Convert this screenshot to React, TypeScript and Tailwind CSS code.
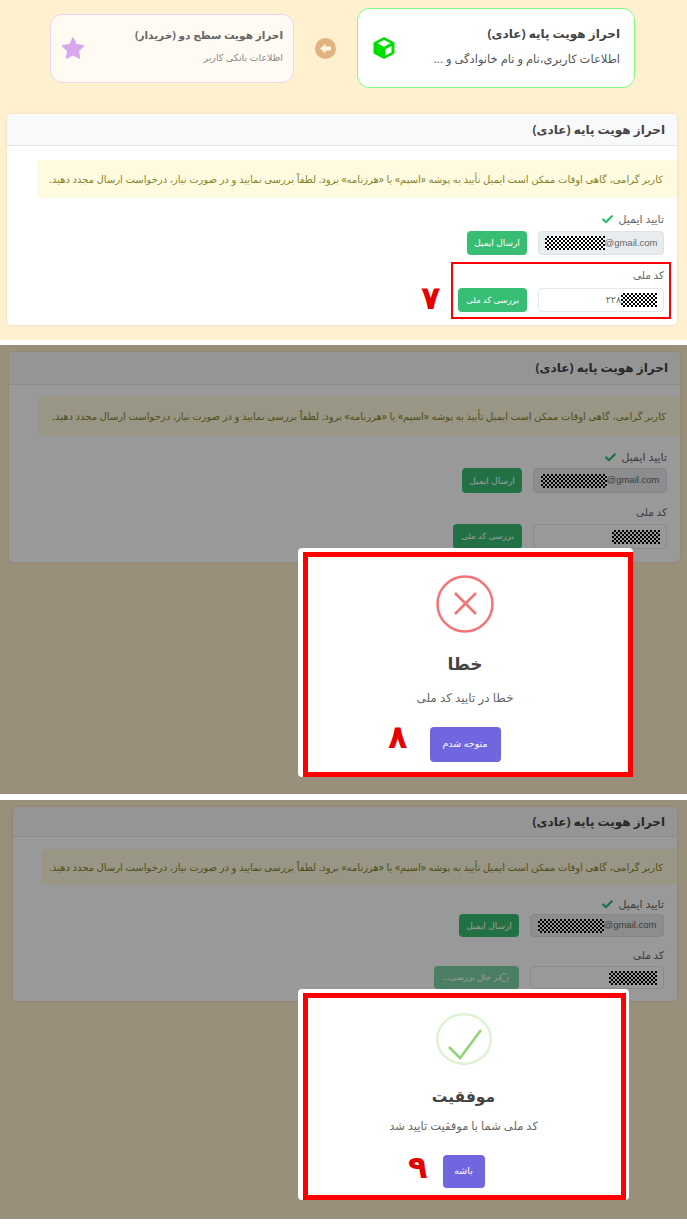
import { Check, Loader2 } from "lucide-react";

const fa = "font-['Noto_Sans','DejaVu_Sans',sans-serif]";
const mask = "inline-block h-[14px] bg-[repeating-conic-gradient(#000_0_25%,#fff_0_50%)] bg-[length:4px_4px]";

function KycCard({ wrap, head, body, alert, lblTop, lblTop2, rowTop, rowH, emailW, codeW, maskW, codeMask, pb, loading, digits }: any) {
  return (
    <div className={`bg-white rounded shadow-[0_0_3px_rgba(0,0,0,0.12)] ${wrap}`}>
      <div className={`bg-[#f8f9fa] border-b border-[#e3e6ea] rounded-t px-[12px] flex items-center ${head}`}>
        <h2 className="text-[12px] font-bold text-[#444]">احراز هویت پایه (عادی)</h2>
      </div>
      <div className={`${body} ${pb}`}>
        <div className={`bg-[#fffbe0] rounded-l flex items-center pr-[14px] text-[10px] text-[#84842a] whitespace-nowrap ${alert}`}>
          کاربر گرامی، گاهی اوقات ممکن است ایمیل تأیید به پوشه «اسپم» یا «هرزنامه» برود. لطفاً بررسی نمایید و در صورت نیاز، درخواست ارسال مجدد دهید.
        </div>
        <div className="px-[13px]">
          <div className={`flex items-center gap-1 text-[11px] text-[#666] h-[16px] ${lblTop}`}>
            تایید ایمیل
            <Check size={13} strokeWidth={4} className="text-[#2ebd6e]" />
          </div>
          <div className={`flex items-center gap-[11px] ${rowTop} ${rowH}`}>
            <div className={`h-full bg-[#e9ecef] border border-[#dee2e6] rounded flex items-center justify-center text-[9.5px] text-[#666] font-['Liberation_Sans',sans-serif] ${emailW}`} dir="ltr">
              <span className={`${mask} ${maskW}`} />
              @gmail.com
            </div>
            <button className="h-full w-[60px] bg-[#37bd74] rounded text-white text-[9px]">ارسال ایمیل</button>
          </div>
          <div className={`text-[10.5px] text-[#666] h-[16px] ${lblTop2}`}>کد ملی</div>
          <div className={`flex items-center gap-[11px] ${rowTop} ${rowH}`}>
            <div className={`h-full bg-white border border-[#e3e6ea] rounded flex items-center pr-[6px] text-[9.5px] text-[#666] ${codeW}`}>
              <span className={`${mask} ${codeMask}`} />
              {digits}
            </div>
            {loading ? (
              <button className="h-full w-[85px] bg-[#37bd74]/65 rounded text-white text-[8.5px] whitespace-nowrap flex items-center justify-center">
                <Loader2 size={11} className="ml-[-2px]" />
                در حال بررسی...
              </button>
            ) : (
              <button className="h-full w-[69px] bg-[#37bd74] rounded text-white text-[8.5px] whitespace-nowrap">بررسی کد ملی</button>
            )}
          </div>
        </div>
      </div>
    </div>
  );
}

function Result({ wrap, frame, icon, title, titleCls, text, textCls, button, btnCls, num, numPos }: any) {
  return (
    <div className={`absolute z-20 bg-white rounded-sm ${wrap}`}>
      <div className={`border-[5px] border-[#ff0000] h-full flex flex-col items-center relative ${frame}`}>
        {icon}
        <div className={`font-bold text-[#444] leading-none ${titleCls}`}>{title}</div>
        <div className={`text-[#666] ${textCls}`}>{text}</div>
        <button className={`mt-auto bg-[#6f66e0] rounded-sm text-white ${btnCls}`}>{button}</button>
        <span className={`absolute text-[#e60000] font-bold text-[32px] leading-none ${numPos}`}>{num}</span>
      </div>
    </div>
  );
}

export default function App() {
  return (
    <div dir="rtl" className={`w-[687px] h-[1229px] bg-white overflow-hidden ${fa}`}>
      <section className="relative h-[340px] bg-[#fff0cf] pt-[8px] pr-[52px] pl-[7px]">
        <div className="flex items-center gap-[21px]">
          <div className="w-[278px] h-[80px] shrink-0 bg-white border border-[#7dff7d] rounded-xl flex items-center px-[14px]">
            <div className="flex-1 mt-[-3px]">
              <div className="text-[12px] font-bold text-[#444]">احراز هویت پایه (عادی)</div>
              <div className="text-[11.5px] text-[#555] mt-[7px]">اطلاعات کاربری،نام و نام خانوادگی و ...</div>
            </div>
            <svg width="24" height="24" viewBox="0 0 24 24">
              <path d="M12 1 22.500 6.500V17.500L12 23 1.500 17.500V6.500Z" fill="#00e000" />
              <path d="M12 4 18.500 7.300 12 10.700 5.500 7.300Z" fill="#fff" />
              <path d="M19.500 10 13.500 13.200V19.500L19.500 16.300Z" fill="#fff" />
            </svg>
          </div>
          <div className="w-[21px] h-[21px] shrink-0 rounded-full bg-[#e0b380] flex items-center justify-center">
            <svg width="13" height="13" viewBox="0 0 13 13">
              <path d="M1 6.500 6.500 1.500V4.500H12V8.500H6.500V11.500Z" fill="#fff5e0" />
            </svg>
          </div>
          <div className="w-[244px] h-[69px] shrink-0 bg-[#fffaf2] border border-[#ecd5ee] rounded-xl flex items-center pr-[10px] pl-[10px]">
            <div className="flex-1 mt-[-3px]">
              <div className="text-[10.5px] font-bold text-[#666]">احراز هویت سطح دو (خریدار)</div>
              <div className="text-[9.5px] text-[#888] mt-[8px]">اطلاعات بانکی کاربر</div>
            </div>
            <svg width="24" height="24" viewBox="0 0 24 24">
              <path d="M12 2 15.200 8.800 22.500 9.800 17.200 14.900 18.500 22 12 18.500 5.500 22 6.800 14.900 1.500 9.800 8.800 8.800Z" fill="#d6a8ec" stroke="#d6a8ec" strokeWidth="1.500" strokeLinejoin="round" />
            </svg>
          </div>
        </div>
        <KycCard
          wrap="mt-[26px] mr-[-42px]"
          head="h-[32px]"
          body="pt-[14px]"
          pb="pb-[13px]"
          alert="h-[38px] w-[640px]"
          lblTop="mt-[13px]"
          lblTop2="mt-[13px]"
          rowTop="mt-[4px]"
          rowH="h-[24px]"
          emailW="w-[126px]"
          codeW="w-[126px]"
          maskW="w-[60px]"
          codeMask="w-[36px]"
          digits="۲۲۸"
        />
        <div className="absolute left-[451px] top-[262px] w-[220px] h-[57px] border-2 border-[#ff0000]" />
        <span className="absolute left-[421px] top-[281px] text-[#e60000] font-bold text-[32px] leading-none">۷</span>
      </section>

      <section className="relative h-[449px] mt-[5px] bg-[#fff0cf] pt-[7px] pr-[7px] pl-[9px]">
        <KycCard
          wrap=""
          head="h-[33px]"
          body="pt-[12px]"
          pb="pb-[13px]"
          alert="h-[39px] w-[642px]"
          lblTop="mt-[13px]"
          lblTop2="mt-[12px]"
          rowTop="mt-[3px]"
          rowH="h-[25px]"
          emailW="w-[134px]"
          codeW="w-[134px]"
          maskW="w-[66px]"
          codeMask="w-[48px]"
        />
        <div className="absolute inset-0 bg-black/40 z-10" />
        <Result
          wrap="left-[298px] top-[203px] w-[335px] h-[229px] pl-[5px] pt-[4px]"
          frame="pr-[6px]"
          icon={
            <svg width="58" height="58" viewBox="0 0 58 58" className="mt-[18px] shrink-0">
              <circle cx="29" cy="29" r="27.500" fill="none" stroke="#f27474" strokeWidth="2.500" />
              <path d="M19 18 40 39M40 18 19 39" stroke="#f27474" strokeWidth="2.500" />
            </svg>
          }
          title="خطا"
          titleCls="text-[17px] mt-[22px]"
          text="خطا در تایید کد ملی"
          textCls="text-[12px] mt-[17px]"
          button="متوجه شدم"
          btnCls="w-[71px] h-[35px] mb-[10px] text-[9.500px]"
          num="۸"
          numPos="left-[80px] bottom-[20px]"
        />
      </section>

      <section className="relative h-[419px] mt-[6px] bg-[#fff0cf] pt-[7px] pr-[10px] pl-[13px]">
        <KycCard
          wrap=""
          head="h-[30px]"
          body="pt-[12px]"
          pb="pb-[12px]"
          alert="h-[36px] w-[636px]"
          lblTop="mt-[11px]"
          lblTop2="mt-[11px]"
          rowTop="mt-[2px]"
          rowH="h-[23px]"
          emailW="w-[134px]"
          codeW="w-[134px]"
          maskW="w-[66px]"
          codeMask="w-[48px]"
          loading
        />
        <div className="absolute inset-0 bg-black/40 z-10" />
        <Result
          wrap="left-[298px] top-[189px] w-[331px] h-[211px] pl-[5px] pr-[3px] pt-[4px]"
          frame="pr-[2px]"
          icon={
            <svg width="56" height="52" viewBox="0 0 56 52" preserveAspectRatio="none" className="mt-[15px] shrink-0">
              <ellipse cx="28" cy="26" rx="26.800" ry="24.800" fill="none" stroke="#dff2d5" strokeWidth="2.500" />
              <path d="M13 34 24 45 45 17" fill="none" stroke="#8fd573" strokeWidth="2.500" />
            </svg>
          }
          title="موفقیت"
          titleCls="text-[15.500px] mt-[24px]"
          text="کد ملی شما با موفقیت تایید شد"
          textCls="text-[11.500px] mt-[12px]"
          button="باشه"
          btnCls="w-[42px] h-[33px] mb-[7px] text-[9.500px]"
          num="۹"
          numPos="left-[100px] bottom-[13px]"
        />
      </section>
    </div>
  );
}
